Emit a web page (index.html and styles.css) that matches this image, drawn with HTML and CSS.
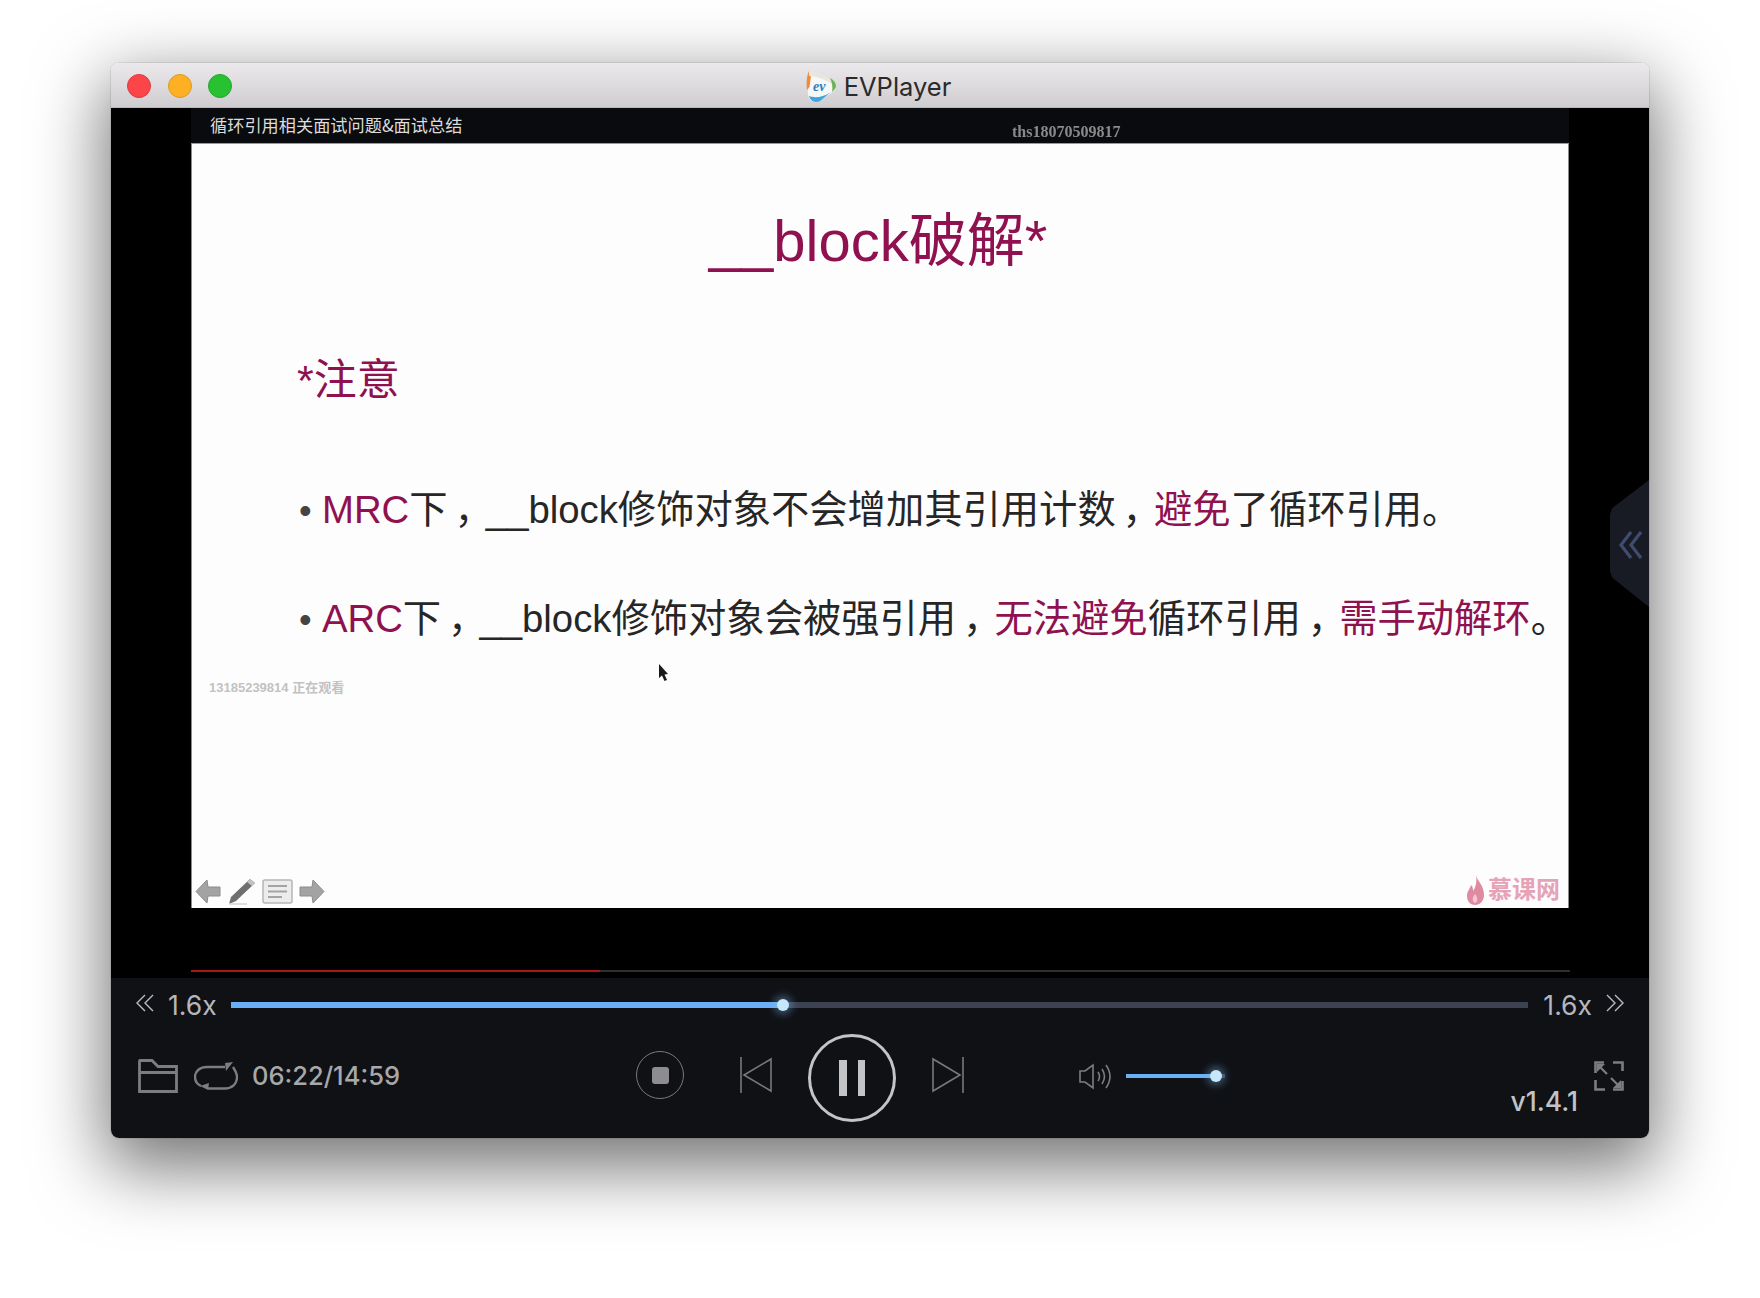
FILE: index.html
```html
<!DOCTYPE html>
<html lang="zh-CN">
<head>
    <meta charset="UTF-8">
    <title>EVPlayer</title>
    <link rel="stylesheet" href="styles.css">
</head>
<body>

<div class="window">
    <div class="titlebar">
        <div class="lights">
            <span class="light red"></span>
            <span class="light yellow"></span>
            <span class="light green"></span>
        </div>
        <div class="app-title">
            <svg class="app-logo" width="31" height="33" viewBox="0 0 31 33">
                <path d="M4 2 L24 9 C28 11 30 13 30 16 C30 19 28 21 24 24 L12 31 C8 33 5 32 3 28 C1 22 1 8 4 2 Z" fill="#f6f7f7"/>
                <path d="M3 1 C1 5 0 12 1 20 L3.5 17 L5 6 Z" fill="#ee8a3c"/>
                <path d="M3 1 C8 1 18 5 25 9 C28 11 30 13 30 16 L26 14 C18 9 10 6 3 6 Z" fill="#e9e6df"/>
                <path d="M24 8 C28 10 30 13 30 16 C30 18 28 20 26 22 C27 17 26 12 24 8 Z" fill="#6bb25a"/>
                <path d="M3 26 C8 28 16 28 25 22 L14 31 C9 33 5 32 3 26 Z" fill="#3da5dc"/>
                <text class="logo-text" x="7" y="21">ev</text>
            </svg>
            <span>EVPlayer</span>
        </div>
    </div>

    <div class="stage">
        <div class="strip">
            <span class="strip-title">循环引用相关面试问题&amp;面试总结</span>
            <span class="strip-user">ths18070509817</span>
        </div>
        <div class="slide">
            <h1 class="slide-title">__block破解*</h1>
            <h2 class="slide-note">*注意</h2>
            <p class="bullet first"><span class="dot">•</span><em>MRC</em>下<span class="comma">，</span>__block修饰对象不会增加其引用计数<span class="comma">，</span><em>避免</em>了循环引用。</p>
            <p class="bullet second"><span class="dot">•</span><em>ARC</em>下<span class="comma">，</span>__block修饰对象会被强引用<span class="comma">，</span><em>无法避免</em>循环引用<span class="comma">，</span><em>需手动解环</em>。</p>
            <div class="watching">13185239814 正在观看</div>
            <div class="slide-foot">
                <div class="slide-tools">
                    <svg width="26" height="25" viewBox="0 0 26 25"><path d="M12 1 L1 12.5 L12 24 L13 17 H25 V8 H13 Z" fill="#a3a3a3" stroke="#8c8c8c"/></svg>
                    <svg width="29" height="27" viewBox="0 0 29 27"><path d="M23 1 L28 5 L9 23 L2 26 L4 19 Z" fill="#6f6f6f"/><path d="M23 1 L28 5 L25 8 L20 4 Z" fill="#c2c2c2"/><path d="M2 26 H20" stroke="#d4d4d4" stroke-width="1.5"/></svg>
                    <svg width="31" height="25" viewBox="0 0 31 25"><rect x="1" y="1" width="29" height="23" rx="2" fill="#ececec" stroke="#b5b5b5" stroke-width="1.5"/><path d="M6 7 H25 M6 12.5 H25 M6 18 H20" stroke="#a3a3a3" stroke-width="2"/></svg>
                    <svg width="26" height="25" viewBox="0 0 26 25"><path d="M14 1 L25 12.5 L14 24 L13 17 H1 V8 H13 Z" fill="#a3a3a3" stroke="#8c8c8c"/></svg>
                </div>
                <div class="brand">
                    <svg width="17" height="30" viewBox="0 0 17 30"><path d="M9 0 C10 6 17 10 17 20 C17 26 13 30 8 30 C3 30 0 26 0 21 C0 16 3 14 4 10 C6 12 6 14 6 16 C9 12 10 6 9 0 Z" fill="#e08aa2"/><path d="M8 19 C11 22 11 27 8 28 C5 27 5 22 8 19 Z" fill="#f3c8d4"/></svg>
                    <span>慕课网</span>
                </div>
            </div>
        </div>
        <div class="redline"><div class="redline-fill"></div></div>
        <div class="side-tab">
            <svg width="24" height="30" viewBox="0 0 24 30"><path d="M12 2 L2 15 L12 28 M22 2 L12 15 L22 28" fill="none" stroke="#3f4c6e" stroke-width="3.2"/></svg>
        </div>
    </div>

    <div class="controls">
        <div class="speed-row">
            <svg class="chev" width="18" height="18" viewBox="0 0 18 18"><path d="M9 1 L1 9 L9 17 M17 1 L9 9 L17 17" fill="none" stroke="#b9bcc2" stroke-width="1.4"/></svg>
            <span class="speed left">1.6x</span>
            <div class="seek">
                <div class="seek-fill"></div>
                <span class="seek-thumb"></span>
            </div>
            <span class="speed right">1.6x</span>
            <svg class="chev" width="18" height="18" viewBox="0 0 18 18"><path d="M1 1 L9 9 L1 17 M9 1 L17 9 L9 17" fill="none" stroke="#b9bcc2" stroke-width="1.4"/></svg>
        </div>
        <div class="button-row">
            <svg width="40" height="34" viewBox="0 0 40 34"><path d="M1.5 10 V2 Q1.5 1.5 2 1.5 H14 L20 7.5 H38.5 V32.5 H1.5 Z M1.5 13.5 H38.5" fill="none" stroke="#7b7d80" stroke-width="2.8"/></svg>
            <svg class="loop" width="44" height="28" viewBox="0 0 44 28"><path d="M31 5 H13 C6 5 1 9 1 15 C1 19 3 22 7 24" fill="none" stroke="#7b7d80" stroke-width="2.4"/><path d="M14 26.5 H31 C38 26.5 43 22 43 15 C43 11 41 8 39 5" fill="none" stroke="#7b7d80" stroke-width="2.4"/><path d="M31 1 L39 0 L32 9 Z M6 24 L15 21 L14 28 Z" fill="#7b7d80"/></svg>
            <span class="time">06:22/14:59</span>

            <div class="transport">
                <div class="stop"><span class="stop-square"></span></div>
                <svg class="prev" width="32" height="36" viewBox="0 0 32 36"><path d="M1 0 V36" stroke="#77797c" stroke-width="1.6"/><path d="M31 2 V34 L4 18 Z" fill="none" stroke="#77797c" stroke-width="1.6"/></svg>
                <div class="pause"><span class="pause-bar"></span><span class="pause-bar"></span></div>
                <svg class="next" width="32" height="36" viewBox="0 0 32 36"><path d="M31 0 V36" stroke="#77797c" stroke-width="1.6"/><path d="M1 2 V34 L28 18 Z" fill="none" stroke="#77797c" stroke-width="1.6"/></svg>
            </div>

            <div class="volume-group">
                <svg width="34" height="27" viewBox="0 0 34 27"><path d="M1 8 H6 L14 2 V25 L6 19 H1 Z" fill="none" stroke="#7b7d80" stroke-width="1.6"/><path d="M19 9 Q22 13.5 19 18 M23 6 Q28 13.5 23 21 M27 2 Q35 13.5 27 25" fill="none" stroke="#7b7d80" stroke-width="1.6"/></svg>
                <div class="volume">
                    <div class="volume-fill"></div>
                    <span class="volume-thumb"></span>
                </div>
            </div>

            <div class="right-group">
                <span class="version">v1.4.1</span>
                <svg class="full" width="30" height="30" viewBox="0 0 30 30"><path d="M10 1.5 H1.5 V12 M19 1.5 H28.5 V10 M1.5 19 V28.5 H11 M28.5 20 V28.5 H19" fill="none" stroke="#7b7d80" stroke-width="2.6"/><path d="M4 4 L13 13 M26 26 L17 17" stroke="#7b7d80" stroke-width="2.2"/><path d="M3 3 H11 L3 11 Z M27 27 H19 L27 19 Z" fill="#7b7d80"/></svg>
            </div>
        </div>
    </div>

    <svg class="cursor" width="11" height="18" viewBox="0 0 11 18"><path d="M1 0 L10 10 L6.5 10.5 L9 16 L6.5 17 L4 11.5 L1 14 Z" fill="#1a1a1a"/></svg>
</div>

</body>
</html>
```

FILE: styles.css
```css
* {
    box-sizing: border-box;
}
body {
    margin: 0;
    height: 1298px;
    padding: 63px 0 0 111px;
    background: #fff;
    font-family: Inter, "Noto Sans CJK SC", sans-serif;
    overflow: hidden;
}
.window {
    position: relative;
    width: 1538px;
    height: 1075px;
    border-radius: 8px;
    box-shadow: 0 24px 70px 6px rgba(0, 0, 0, 0.55), 0 0 0 1px rgba(0, 0, 0, 0.08);
}

/* barra de titulo */
.titlebar {
    height: 45px;
    display: grid;
    grid-template-columns: 1fr auto 1fr;
    align-items: center;
    padding-top: 2px;
    background: linear-gradient(to bottom, #ebe9eb, #cfcdcf);
    border-radius: 8px 8px 0 0;
    border-bottom: 1px solid #b8b6b8;
}
.lights {
    display: flex;
    gap: 16.5px;
    padding-left: 16px;
}
.light {
    width: 24px;
    height: 24px;
    border-radius: 50%;
}
.red {
    background: #fc4549;
    border: 1px solid #df3a3e;
}
.yellow {
    background: #fdb024;
    border: 1px solid #de9a1e;
}
.green {
    background: #28c132;
    border: 1px solid #22a82b;
}
.app-title {
    display: flex;
    align-items: center;
    gap: 7px;
    margin-left: -3px;
    font-size: 25.5px;
    color: #2b2a2b;
}
.logo-text {
    font-family: "Liberation Serif", serif;
    font-style: italic;
    font-weight: bold;
    font-size: 14px;
    fill: #2c7fbe;
}

/* area do video */
.stage {
    position: relative;
    height: 870px;
    padding-left: 80px;
    background: #000;
    overflow: hidden;
}
.strip {
    width: 1378px;
    height: 35px;
    position: relative;
    background: #0a0b0e;
}
.strip-title {
    position: absolute;
    left: 19px;
    top: 6px;
    font-family: "Noto Sans CJK SC", sans-serif;
    font-size: 17.2px;
    line-height: 22px;
    color: #dcdcdc;
}
.strip-user {
    position: absolute;
    left: 821px;
    top: 14px;
    font-family: "Liberation Serif", serif;
    font-weight: bold;
    font-size: 16px;
    line-height: 20px;
    color: #8a8a8a;
    filter: blur(0.6px);
}
.slide {
    width: 1378px;
    height: 765px;
    display: flex;
    flex-direction: column;
    padding-top: 63px;
    background: #fefdfe;
    border-left: 1px solid #8a8a8a;
    border-right: 1px solid #8a8a8a;
    border-top: 1px solid #9a9a9a;
    font-family: "Liberation Sans", "Noto Sans CJK SC", sans-serif;
}
.slide-title {
    margin: 0;
    text-align: center;
    font-size: 58px;
    font-weight: normal;
    line-height: 68px;
    color: #8f1150;
    padding-right: 4px;
}
.slide-note {
    margin: 75px 0 0 105px;
    font-size: 43px;
    font-weight: normal;
    line-height: 60px;
    color: #8f1150;
}
.bullet {
    margin: 0;
    padding-left: 107px;
    font-size: 38.3px;
    line-height: 60px;
    white-space: nowrap;
    color: #262626;
}
.bullet.first {
    margin-top: 70px;
}
.bullet.second {
    margin-top: 48px;
}
.bullet em {
    font-style: normal;
    color: #8f1150;
}
/* virgula centrada: glifo de meia largura com folga dos dois lados */
.comma {
    font-feature-settings: "halt";
    padding: 0 0.32em 0 0.18em;
}
.dot {
    display: inline-block;
    width: 23px;
    font-size: 36px;
    color: #444;
}
.watching {
    margin: 30px 0 0 17px;
    font-size: 13px;
    font-weight: bold;
    line-height: 16px;
    color: #c2c2c2;
}
.slide-foot {
    margin-top: auto;
    padding: 0 8px 2px 3px;
    display: flex;
    justify-content: space-between;
    align-items: flex-end;
}
.slide-tools {
    display: flex;
    align-items: center;
    gap: 6px;
    padding-bottom: 1px;
}
.brand {
    display: flex;
    align-items: center;
    gap: 4px;
    padding-bottom: 1px;
    font-size: 24px;
    font-weight: bold;
    line-height: 30px;
    color: #e6a3b7;
}
.redline {
    width: 1379px;
    height: 2px;
    margin-top: 62px;
    background: #2e2e2e;
}
.redline-fill {
    width: 409px;
    height: 2px;
    background: #a8161c;
}
.side-tab {
    position: absolute;
    right: 0;
    top: 372px;
    width: 39px;
    height: 127px;
    padding: 50px 0 0 9px;
    background: #181b24;
    clip-path: polygon(100% 0, 100% 100%, 6% 77%, 0 72%, 0 27%, 6% 22%);
}

/* controles */
.controls {
    height: 160px;
    background: #0f1115;
    border-radius: 0 0 8px 8px;
    color: #b5b7bc;
}
.speed-row {
    height: 54px;
    display: flex;
    align-items: center;
    padding: 0 25px 0 25px;
}
.chev {
    flex: none;
    margin-top: -4px;
}
.speed {
    font-size: 26.5px;
    line-height: 30px;
}
.speed.left {
    margin: 0 14px 0 14px;
}
.speed.right {
    margin: 0 14px 0 15px;
}
.seek {
    position: relative;
    flex: 1;
    height: 6px;
    background: #3c4252;
}
.seek-fill {
    width: 552px;
    height: 6px;
    background: #6ab0f6;
}
.seek-thumb {
    position: absolute;
    left: 546px;
    top: -3px;
    width: 12px;
    height: 12px;
    border-radius: 50%;
    background: #c6e6fb;
    box-shadow: 0 0 8px 3px rgba(130, 190, 240, 0.45);
}
.button-row {
    height: 88px;
    display: flex;
    align-items: center;
    padding-left: 27px;
}
.loop {
    margin-left: 16px;
}
.time {
    width: 150px;
    margin: -1px 0 0 14px;
    font-size: 25.5px;
    font-weight: 500;
    color: #a7a8aa;
    white-space: nowrap;
}
.transport {
    display: flex;
    align-items: center;
    margin-left: 234px;
}
.stop {
    width: 48px;
    height: 48px;
    display: flex;
    align-items: center;
    justify-content: center;
    margin-top: -2px;
    border: 1.5px solid #77797c;
    border-radius: 50%;
}
.stop-square {
    width: 17px;
    height: 17px;
    border-radius: 3px;
    background: #8d8d8f;
}
.prev {
    margin: -2px 0 0 56px;
}
.pause {
    width: 88px;
    height: 88px;
    display: flex;
    align-items: center;
    justify-content: center;
    gap: 11px;
    margin: 4px 36px 0 36px;
    border: 3px solid #c4c4c6;
    border-radius: 50%;
}
.pause-bar {
    width: 7.5px;
    height: 36px;
    background: #c4c4c6;
}
.next {
    margin-top: -2px;
}
.volume-group {
    display: flex;
    align-items: center;
    gap: 13px;
    margin-left: 115px;
}
.volume {
    position: relative;
    width: 99px;
    height: 4px;
    background: #3c4252;
}
.volume-fill {
    width: 90px;
    height: 4px;
    background: #6ab0f6;
}
.volume-thumb {
    position: absolute;
    left: 84px;
    top: -4px;
    width: 12px;
    height: 12px;
    border-radius: 50%;
    background: #c6e6fb;
    box-shadow: 0 0 8px 3px rgba(130, 190, 240, 0.45);
}
.right-group {
    display: flex;
    align-items: center;
    gap: 16px;
    margin-left: auto;
    padding-right: 25px;
}
.version {
    margin-top: 50px;
    font-size: 26.5px;
    font-weight: 500;
    color: #c2c3c6;
}
.cursor {
    position: absolute;
    left: 547px;
    top: 601px;
}
```
